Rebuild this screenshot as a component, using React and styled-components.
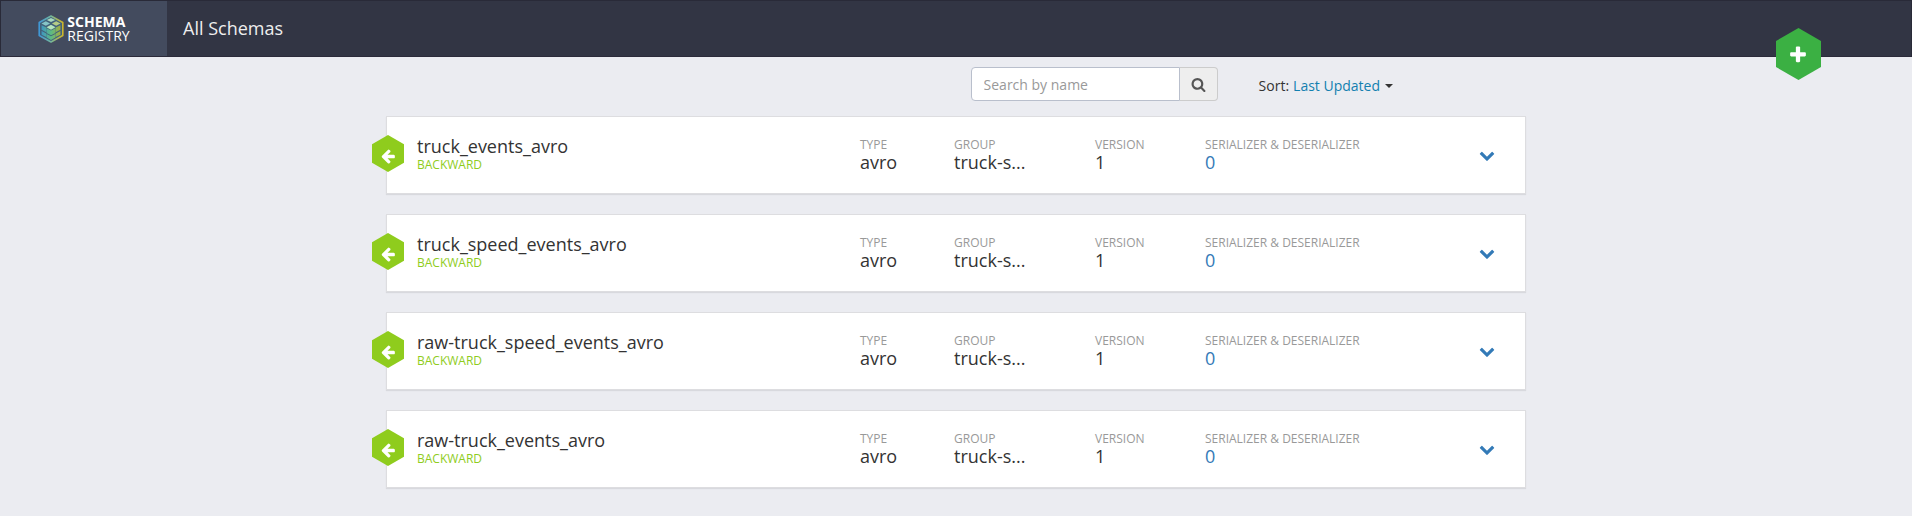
import React from "react";
import styled, { createGlobalStyle } from "styled-components";

const GlobalStyle = createGlobalStyle`
  *, *::before, *::after { box-sizing: border-box; }
  html { background: #ebecf1; }
  body {
    margin: 0;
    background: #ebecf1;
    color: #333;
    font: 14px/20px "Open Sans", "Noto Sans", sans-serif;
  }
  button, input { font: inherit; }
`;

const Header = styled.header`
  position: relative;
  display: flex;
  height: 57px;
  background: #323544;
  border: 1px solid #292a38;
  border-bottom-color: #2b2a3a;
`;

const Brand = styled.a`
  display: flex;
  align-items: center;
  justify-content: center;
  gap: 3px;
  width: 166px;
  background: #434b5e;
  color: #fff;
  font-size: 14px;
  line-height: 14px;
  text-decoration: none;
`;

const BrandName = styled.span`
  display: flex;
  flex-direction: column;
`;

const PageTitle = styled.h1`
  margin: 0;
  padding-left: 16px;
  color: #eee;
  font-size: 18px;
  font-weight: 400;
  line-height: 54px;
`;

const AddButton = styled.button`
  position: absolute;
  top: 27px;
  right: 90px;
  display: grid;
  place-items: center;
  width: 45px;
  height: 52px;
  padding: 1px 1px 0 0;
  border: 0;
  background: #3bb043;
  color: #fff;
  clip-path: polygon(50% 0, 100% 25%, 100% 75%, 50% 100%, 0 75%, 0 25%);
  cursor: pointer;
`;

const Main = styled.main`
  max-width: 1140px;
  margin: 0 auto;
  padding: 10px 0 28px;
`;

const Toolbar = styled.div`
  display: flex;
  justify-content: flex-end;
  gap: 41px;
  margin-bottom: 15px;
  padding-right: 133px;
`;

const SearchForm = styled.form`
  display: flex;
  width: 247px;
  height: 34px;
`;

const SearchInput = styled.input`
  flex: 1;
  min-width: 0;
  padding: 7px 12px 5px;
  border: 1px solid #b9bfcc;
  border-radius: 4px 0 0 4px;
  background: #fff;
  color: #555;
  &::placeholder { color: #999; opacity: 1; }
`;

const SearchButton = styled.button`
  display: grid;
  place-items: center;
  width: 38px;
  padding: 0;
  border: 1px solid #ccc;
  border-left: 0;
  border-radius: 0 4px 4px 0;
  background: #eee;
  color: #555;
`;

const Sort = styled.div`
  display: flex;
  align-items: center;
  gap: 4px;
  padding-top: 4px;
`;

const SortButton = styled.button`
  display: flex;
  align-items: center;
  gap: 5px;
  padding: 0;
  border: 0;
  background: none;
  color: #1280b0;
  cursor: pointer;
`;

const Caret = styled.span`
  border: 4px solid transparent;
  border-top-color: #333;
  border-bottom: 0;
`;

const List = styled.ul`
  display: flex;
  flex-direction: column;
  gap: 20px;
  margin: 0;
  padding: 0;
  list-style: none;
`;

const Card = styled.li`
  position: relative;
  display: grid;
  grid-template-columns: 443px 94px 141px 110px 1fr auto;
  height: 78px;
  padding: 19px 30px 0;
  border: 1px solid #dddde0;
  background: #fff;
  box-shadow: 0 1px 1px rgba(0, 0, 0, 0.08);
`;

const Badge = styled.span`
  position: absolute;
  top: 18px;
  left: -15px;
  display: grid;
  place-items: center;
  width: 32px;
  height: 37px;
  padding-top: 4px;
  background: #8fcc1d;
  color: #fff;
  clip-path: polygon(50% 0, 100% 25%, 100% 75%, 50% 100%, 0 75%, 0 25%);
`;

const Name = styled.h2`
  margin: 0;
  font-size: 18px;
  font-weight: 400;
  line-height: 20px;
`;

const Compatibility = styled.p`
  margin: 0;
  color: #8fcc1d;
  font-size: 12px;
  line-height: 18px;
`;

const Label = styled.div`
  color: #999;
  font-size: 12px;
  line-height: 18px;
`;

const Value = styled.div`
  color: ${(p) => (p.$accent ? "#337ab7" : "#333")};
  font-size: 18px;
  line-height: 16px;
`;

const ExpandButton = styled.button`
  align-self: start;
  display: grid;
  height: 38px;
  padding: 0;
  border: 0;
  background: none;
  color: #337ab7;
  place-items: center;
  cursor: pointer;
`;

const paths = {
  plus: "M1600 736v192q0 40-28 68t-68 28h-416v416q0 40-28 68t-68 28h-192q-40 0-68-28t-28-68v-416h-416q-40 0-68-28t-28-68v-192q0-40 28-68t68-28h416v-416q0-40 28-68t68-28h192q40 0 68 28t28 68v416h416q40 0 68 28t28 68z",
  left: "M1664 896v128q0 53-32.5 90.5t-84.5 37.5h-704l293 294q38 36 38 90t-38 90l-75 76q-37 37-90 37-52 0-91-37l-651-652q-37-37-37-90 0-52 37-91l651-650q38-38 91-38 52 0 90 38l75 74q38 38 38 91t-38 91l-293 293h704q52 0 84.5 37.5t32.5 90.5z",
  down: "M1683 808l-742 741q-19 19-45 19t-45-19l-742-741q-19-19-19-45.500t19-45.500l166-165q19-19 45-19t45 19l531 531 531-531q19-19 45-19t45 19l166 165q19 19 19 45.500t-19 45.500z",
  search: "M1216 832q0-185-131.500-316.500t-316.500-131.500-316.500 131.500-131.500 316.500 131.500 316.500 316.500 131.500 316.500-131.500 131.500-316.500zm512 832q0 52-38 90t-90 38q-54 0-90-38l-343-342q-179 124-399 124-143 0-273.500-55.500t-225-150-150-225-55.500-273.500 55.500-273.500 150-225 225-150 273.500-55.500 273.500 55.500 225 150 150 225 55.500 273.500q0 220-124 399l343 343q37 37 37 90z",
};

function Icon({ name, size }) {
  return (
    <svg width={size} height={size} viewBox="0 0 1792 1792" fill="currentColor" aria-hidden="true">
      <path d={paths[name]} />
    </svg>
  );
}

function Logo() {
  return (
    <svg width="26" height="28" viewBox="0 0 26 28" aria-hidden="true">
      <defs>
        <linearGradient id="edge" x1="0" x2="1">
          <stop offset="0" stopColor="#3f97d6" />
          <stop offset="0.5" stopColor="#74b69b" />
          <stop offset="1" stopColor="#cdb52a" />
        </linearGradient>
        <linearGradient id="side" gradientUnits="userSpaceOnUse" x1="3" x2="23" y1="0" y2="0">
          <stop offset="0" stopColor="#3d94c4" />
          <stop offset="0.5" stopColor="#5cbb84" />
          <stop offset="1" stopColor="#a9ab3a" />
        </linearGradient>
      </defs>
      <path d="M13 1 24.800 7.500v13L13 27 1.200 20.500v-13Z" fill="#42627a" stroke="url(#edge)" strokeWidth="1.600" strokeLinejoin="round" />
      <path
        d="m3.600 10.200 4.700 2.400v4.600l-4.700-2.400Zm0 5.900 4.700 2.400v3.600l-4.700-2.400Zm18.800-5.900-4.700 2.400v4.600l4.700-2.400Zm0 5.900-4.700 2.400v3.600l4.700-2.400ZM8.600 13.300l4.400 2.300 4.400-2.300v4.700L13 20.300l-4.400-2.300Zm0 5.700 4.400 2.300 4.400-2.300v3.500L13 24.900l-4.400-2.400Z"
        fill="url(#side)"
      />
      <path d="m13 2.900 4.200 2.100L13 7.100 8.800 5Z" fill="#a9d9bd" />
      <path d="m7.800 6.200 4.300 2.300-4.300 2.300-4.300-2.300Z" fill="#86c5c6" />
      <path d="m18.200 6.200 4.300 2.300-4.300 2.300-4.300-2.300Z" fill="#b5cc86" />
      <path d="m13 9.800 4.500 2.400-4.500 2.500-4.500-2.500Z" fill="#b4e6bd" />
    </svg>
  );
}

const schemas = [
  "truck_events_avro",
  "truck_speed_events_avro",
  "raw-truck_speed_events_avro",
  "raw-truck_events_avro",
];

function Field({ label, value, accent }) {
  return (
    <div>
      <Label>{label}</Label>
      <Value $accent={accent}>{value}</Value>
    </div>
  );
}

function SchemaCard({ name }) {
  return (
    <Card>
      <Badge><Icon name="left" size={16} /></Badge>
      <div>
        <Name>{name}</Name>
        <Compatibility>BACKWARD</Compatibility>
      </div>
      <Field label="TYPE" value="avro" />
      <Field label="GROUP" value="truck-s..." />
      <Field label="VERSION" value="1" />
      <Field label="SERIALIZER & DESERIALIZER" value="0" accent />
      <ExpandButton type="button" aria-label={`Expand ${name}`}>
        <Icon name="down" size={16} />
      </ExpandButton>
    </Card>
  );
}

export default function App() {
  return (
    <>
      <GlobalStyle />
      <Header>
        <Brand href="#">
          <Logo />
          <BrandName><b>SCHEMA</b><span>REGISTRY</span></BrandName>
        </Brand>
        <PageTitle>All Schemas</PageTitle>
        <AddButton type="button" aria-label="Add schema"><Icon name="plus" size={20} /></AddButton>
      </Header>
      <Main>
        <Toolbar>
          <SearchForm role="search" onSubmit={(e) => e.preventDefault()}>
            <SearchInput type="text" placeholder="Search by name" aria-label="Search by name" />
            <SearchButton type="submit" aria-label="Search"><Icon name="search" size={15} /></SearchButton>
          </SearchForm>
          <Sort>
            <span>Sort:</span>
            <SortButton type="button" aria-haspopup="menu">Last Updated<Caret /></SortButton>
          </Sort>
        </Toolbar>
        <List>
          {schemas.map((name) => <SchemaCard key={name} name={name} />)}
        </List>
      </Main>
    </>
  );
}
